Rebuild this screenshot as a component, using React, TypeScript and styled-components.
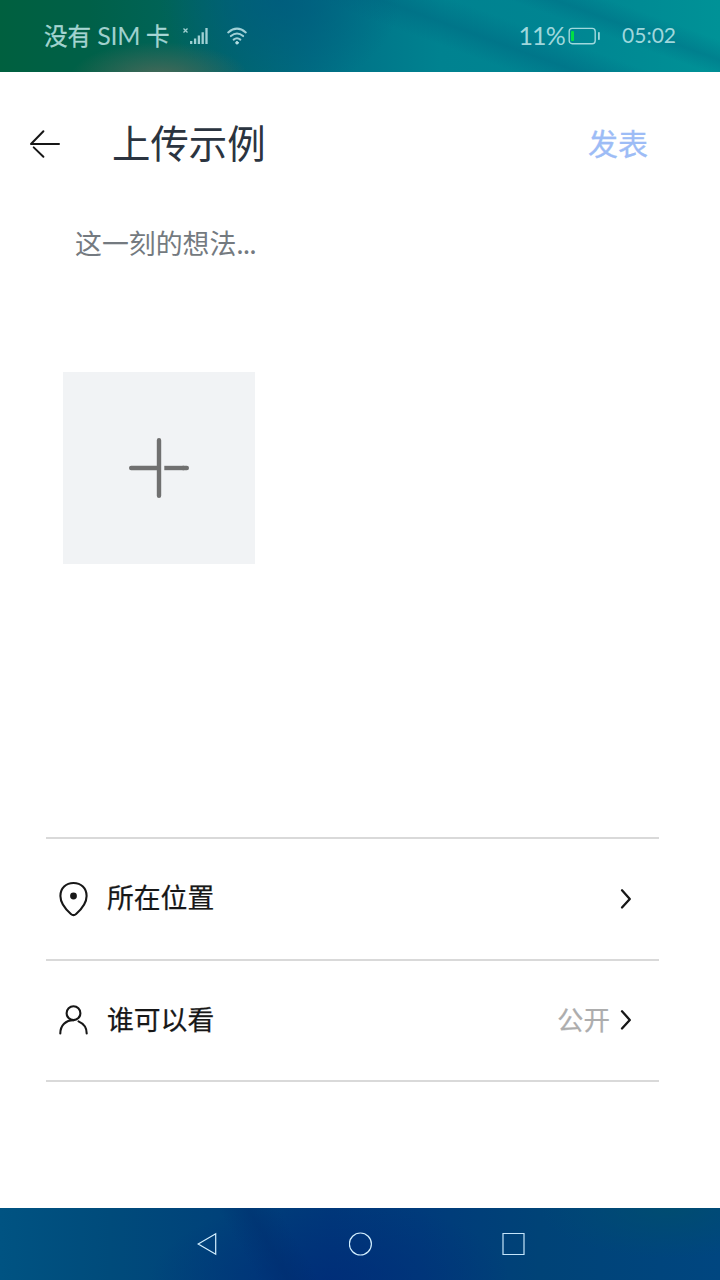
import React from 'react';
import styled, { createGlobalStyle } from 'styled-components';

const GlobalStyle = createGlobalStyle`
  * { box-sizing: border-box; }
  body { margin: 0; background: #fff; font-family: "Noto Sans CJK SC", sans-serif; }
  svg { display: block; flex: none; }
`;

const Screen = styled.div`
  width: 720px;
  height: 1280px;
  display: flex;
  flex-direction: column;
  background: #fff;
`;

const StatusBar = styled.header`
  height: 72px;
  flex: none;
  display: flex;
  align-items: center;
  padding: 0 44px;
  color: rgba(205, 240, 242, 0.78);
  background:
    radial-gradient(ellipse 90px 36px at 160px 78px, rgba(82, 105, 88, 0.9), rgba(82, 105, 88, 0) 100%),
    radial-gradient(ellipse 120px 90px at 280px 0, rgba(0, 90, 126, 0.75), rgba(0, 90, 126, 0) 100%),
    linear-gradient(20deg, transparent 56%, rgba(0, 104, 130, 0.5) 63%, transparent 71%),
    linear-gradient(20deg, transparent 77%, rgba(0, 104, 130, 0.4) 82%, transparent 88%),
    linear-gradient(90deg, #00603f 0, #006048 90px, #006458 170px, #006670 240px, #006c82 310px, #007488 350px, #008290 440px, #008592 560px, #008b94 640px, #009297 720px);
`;

const StatusText = styled.span<{ $size: number; $ml?: number; $spacing?: number; $latin?: boolean }>`
  font-family: ${p => (p.$latin ? 'Lato, ' : '')}"Noto Sans CJK SC", sans-serif;
  font-size: ${p => p.$size}px;
  line-height: 36px;
  margin-left: ${p => p.$ml ?? 0}px;
  margin-top: -2px;
  letter-spacing: ${p => p.$spacing ?? 0}px;
  font-weight: 400;
  -webkit-text-stroke: ${p => (p.$latin ? 0 : 0.3)}px currentColor;
  white-space: nowrap;
`;

const Cluster = styled.div<{ $width?: number }>`
  display: flex;
  align-items: center;
  width: ${p => (p.$width ? `${p.$width}px` : 'auto')};
`;

const WifiIcon = styled.svg`
  margin-left: 16px;
`;

const BatteryIcon = styled.svg`
  margin-left: 3px;
`;

const Spacer = styled.div`flex: 1;`;

const TitleBar = styled.div`
  height: 144px;
  flex: none;
  display: flex;
  align-items: center;
  padding: 0 72px 0 29px;
`;

const Title = styled.h1`
  margin: -7px 0 0 51px;
  font-size: 38.4px;
  line-height: 56px;
  font-weight: 400;
  color: #2b3440;
`;

const Publish = styled.button`
  margin: -4px 0 0 auto;
  padding: 0;
  border: 0;
  background: none;
  font: 400 30px/44px "Noto Sans CJK SC", sans-serif;
  -webkit-text-stroke: 0.3px currentColor;
  color: #9dbcf6;
`;

const Composer = styled.main`
  height: 621px;
  flex: none;
  padding: 7px 63px 0;
`;

const Thought = styled.div`
  height: 149px;
  padding-left: 12px;
  font-size: 26.9px;
  line-height: 40px;
  color: #747a80;
`;

const Ellipsis = styled.span`
  letter-spacing: -1px;
`;

const AddPhoto = styled.button`
  width: 192px;
  height: 192px;
  padding: 0;
  border: 0;
  display: grid;
  place-items: center;
  background: #f1f3f5;
`;

const Options = styled.section`
  margin: 0 61px 0 46px;
  border-top: 2px solid #d9d9d9;
`;

const OptionRow = styled.div`
  height: 121.5px;
  display: flex;
  align-items: center;
  padding: 0 25px 0 12px;
  border-bottom: 2px solid #d9d9d9;
`;

const Label = styled.span`
  margin: -3px 0 0 17px;
  font-size: 26.8px;
  line-height: 40px;
  font-weight: 400;
  -webkit-text-stroke: 0.25px currentColor;
  color: #171717;
`;

const Value = styled.span`
  margin: -3px 8px 0 0;
  font-size: 26.5px;
  line-height: 40px;
  -webkit-text-stroke: 0.2px currentColor;
  color: #adadad;
`;

const NavBar = styled.footer`
  height: 72px;
  margin-top: auto;
  display: flex;
  align-items: center;
  justify-content: center;
  gap: 129px;
  background:
    linear-gradient(60deg, transparent 34%, rgba(0, 44, 108, 0.4) 38%, transparent 42%),
    radial-gradient(ellipse 180px 80px at 330px 72px, rgba(0, 43, 120, 0.75), rgba(0, 43, 120, 0)),
    radial-gradient(ellipse 130px 50px at 670px 0, rgba(0, 77, 112, 0.9), rgba(0, 77, 112, 0)),
    linear-gradient(90deg, #005382 0, #004b7b 110px, #00427a 220px, #00387a 330px, #003b7b 420px, #004377 540px, #004680 720px);
`;

const Chevron = () => (
  <svg width="16" height="24" viewBox="0 0 16 24" fill="none" stroke="#171717" strokeWidth="2.3" strokeLinecap="round" strokeLinejoin="round">
    <path d="M4 3.3 11.8 11.9 4 20.5" />
  </svg>
);

export default function App() {
  return (
    <Screen>
      <GlobalStyle />
      <StatusBar>
        <Cluster $width={138}>
          <StatusText $size={23.6}>没有</StatusText>
          <StatusText $size={25} $ml={6} $latin $spacing={-0.3}>SIM</StatusText>
          <StatusText $size={23.6} $ml={6}>卡</StatusText>
        </Cluster>
        <svg width="28" height="20" viewBox="0 0 28 20" fill="none" stroke="currentColor">
          <path d="m1.5 2.5 4 4m0-4-4 4" strokeWidth="1.3" />
          <path d="M9.2 15v3M13.1 12.5V18M16.9 9.5V18M20.7 6.2V18M24.5 2v16" strokeWidth="2.3" />
        </svg>
        <WifiIcon width="22" height="20" viewBox="0 0 22 20" fill="none" stroke="currentColor" strokeWidth="2" strokeLinecap="round">
          <path d="M2.2 6.4Q11 -1.1 19.8 6.4M4.9 10.1Q11 5 17.1 10.1M7.7 13.6Q11 11 14.3 13.6" />
          <circle cx="11" cy="16.8" r="1.3" fill="currentColor" strokeWidth="1" />
        </WifiIcon>
        <Spacer />
        <StatusText $size={25} $latin $spacing={-0.8}>11%</StatusText>
        <BatteryIcon width="34" height="20" viewBox="0 0 34 20">
          <rect x="1.2" y="2.4" width="26" height="15.3" rx="3" fill="none" stroke="currentColor" strokeWidth="1.4" />
          <rect x="3" y="5" width="3" height="10" rx="1" fill="#00df43" />
          <rect x="30" y="6" width="1.8" height="8" rx=".8" fill="currentColor" />
        </BatteryIcon>
        <StatusText $size={21} $ml={20} $latin>05:02</StatusText>
      </StatusBar>

      <TitleBar>
        <svg width="32" height="32" viewBox="0 0 32 32" fill="none" stroke="#171717" strokeWidth="2" strokeLinecap="round" strokeLinejoin="round">
          <path d="M30 16H2L14.4 3.2M4.7 19.4l9.7 9.3" />
        </svg>
        <Title>上传示例</Title>
        <Publish>发表</Publish>
      </TitleBar>

      <Composer>
        <Thought>这一刻的想法<Ellipsis>...</Ellipsis></Thought>
        <AddPhoto aria-label="添加">
          <svg width="64" height="64" viewBox="0 0 64 64" fill="none" stroke="#707070" strokeWidth="4.4">
            <path d="M32 4.2v55.6M4.2 32H32" strokeLinecap="round" />
            <path d="M37.3 32H57" />
            <path d="M56 32h3.8" strokeLinecap="round" />
          </svg>
        </AddPhoto>
      </Composer>

      <Options>
        <OptionRow>
          <svg width="32" height="38" viewBox="0 0 32 38" fill="none" stroke="#171717" strokeWidth="2.1">
            <path d="M15.5 3C8 3 2.4 8.2 2.4 16c0 7.4 5.2 13.3 10.5 18 1.7 1.5 3.5 1.5 5.2 0C23.4 29.3 28.6 23.4 28.6 16 28.6 8.2 23 3 15.5 3Z" />
            <circle cx="15.5" cy="16" r="3.4" fill="#171717" stroke="none" />
          </svg>
          <Label>所在位置</Label>
          <Spacer />
          <Chevron />
        </OptionRow>
        <OptionRow>
          <svg width="32" height="32" viewBox="0 0 32 32" fill="none" stroke="#171717" strokeWidth="2.1" strokeLinecap="round">
            <circle cx="15.5" cy="9.2" r="6.9" />
            <path d="M2.3 29.5C2.3 21.5 7.8 16.1 15.5 16.1M20.5 17.4c4.9 2.1 8.2 6.5 8.2 12.1" />
          </svg>
          <Label>谁可以看</Label>
          <Spacer />
          <Value>公开</Value>
          <Chevron />
        </OptionRow>
      </Options>

      <NavBar>
        <svg width="25" height="24" viewBox="0 0 25 24" fill="none" stroke="#d2efff" strokeWidth="1.2">
          <path d="M3.2 12 20.7 1.8v20.4Z" />
        </svg>
        <svg width="24" height="24" viewBox="0 0 24 24" fill="none" stroke="#d2efff" strokeWidth="1.2">
          <circle cx="11.4" cy="12" r="11" />
        </svg>
        <svg width="24" height="24" viewBox="0 0 24 24" fill="none" stroke="#c4e4fa" strokeWidth="1.2">
          <path d="M1 1.5h21v21H1Z" />
        </svg>
      </NavBar>
    </Screen>
  );
}
